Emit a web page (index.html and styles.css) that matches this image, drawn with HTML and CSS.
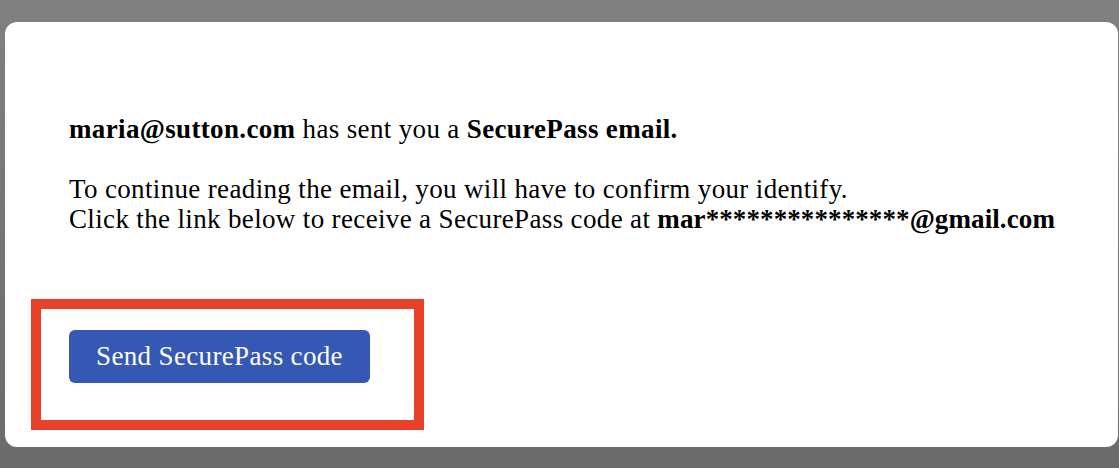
FILE: index.html
```html
<!DOCTYPE html>
<html>
<head>
<meta charset="utf-8">
<link rel="stylesheet" href="styles.css">
</head>
<body>
<div class="card">
  <div class="message">
    <p class="line first"><b>maria@sutton.com</b> has sent you a <b>SecurePass email.</b></p>
    <p class="line">To continue reading the email, you will have to confirm your identify.<br>Click the link below to receive a SecurePass code at <b class="masked">mar***************@gmail.com</b></p>
  </div>
  <div class="highlight">
    <button class="send">Send SecurePass code</button>
  </div>
</div>
</body>
</html>
```
FILE: styles.css
```css
html, body {
  margin: 0;
  padding: 0;
  height: 100%;
}
body {
  background: linear-gradient(#808080, #6b6b6b);
  font-family: "Liberation Serif", "Times New Roman", serif;
  color: #000;
  padding: 22px 1px 0 5px;
  box-sizing: border-box;
}
.card {
  background: #fff;
  border-radius: 12px;
  height: 425px;
  padding: 0 26px;
  box-sizing: border-box;
  display: flex;
  flex-direction: column;
}
.message {
  padding: 92px 0 0 38px;
  font-size: 27px;
  line-height: 30px;
  letter-spacing: 0.35px;
  white-space: nowrap;
}
.masked {
  letter-spacing: 0.1px;
}
.line {
  margin: 0;
}
.line.first {
  margin-bottom: 30px;
}
.highlight {
  margin-top: 65px;
  width: 393px;
  height: 131px;
  border: 10px solid #e8412a;
  box-sizing: border-box;
  padding: 21px 0 0 28px;
}
.send {
  display: block;
  width: 301px;
  height: 53px;
  background: #3558b5;
  color: #fff;
  border: none;
  border-radius: 6px;
  font-family: "Liberation Serif", "Times New Roman", serif;
  font-size: 27px;
  letter-spacing: 0.35px;
  padding: 0;
}
```
